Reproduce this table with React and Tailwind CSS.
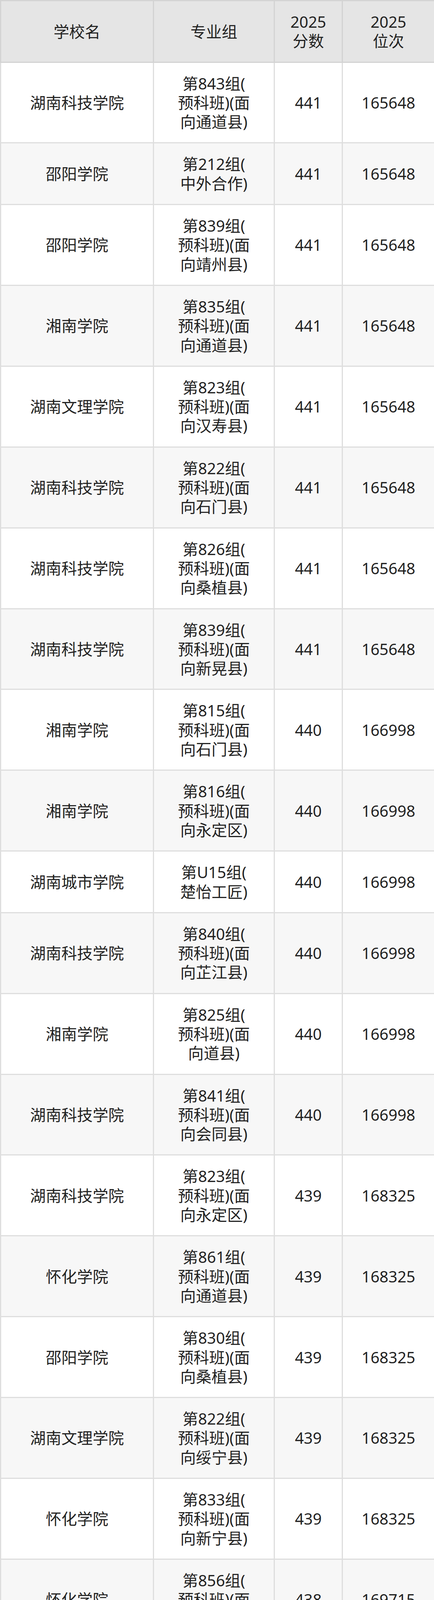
import React from 'react';

const rows = [
  ['湖南科技学院', ['第843组(', '预科班)(面', '向通道县)'], '441', '165648'],
  ['邵阳学院', ['第212组(', '中外合作)'], '441', '165648'],
  ['邵阳学院', ['第839组(', '预科班)(面', '向靖州县)'], '441', '165648'],
  ['湘南学院', ['第835组(', '预科班)(面', '向通道县)'], '441', '165648'],
  ['湖南文理学院', ['第823组(', '预科班)(面', '向汉寿县)'], '441', '165648'],
  ['湖南科技学院', ['第822组(', '预科班)(面', '向石门县)'], '441', '165648'],
  ['湖南科技学院', ['第826组(', '预科班)(面', '向桑植县)'], '441', '165648'],
  ['湖南科技学院', ['第839组(', '预科班)(面', '向新晃县)'], '441', '165648'],
  ['湘南学院', ['第815组(', '预科班)(面', '向石门县)'], '440', '166998'],
  ['湘南学院', ['第816组(', '预科班)(面', '向永定区)'], '440', '166998'],
  ['湖南城市学院', ['第U15组(', '楚怡工匠)'], '440', '166998'],
  ['湖南科技学院', ['第840组(', '预科班)(面', '向芷江县)'], '440', '166998'],
  ['湘南学院', ['第825组(', '预科班)(面', '向道县)'], '440', '166998'],
  ['湖南科技学院', ['第841组(', '预科班)(面', '向会同县)'], '440', '166998'],
  ['湖南科技学院', ['第823组(', '预科班)(面', '向永定区)'], '439', '168325'],
  ['怀化学院', ['第861组(', '预科班)(面', '向通道县)'], '439', '168325'],
  ['邵阳学院', ['第830组(', '预科班)(面', '向桑植县)'], '439', '168325'],
  ['湖南文理学院', ['第822组(', '预科班)(面', '向绥宁县)'], '439', '168325'],
  ['怀化学院', ['第833组(', '预科班)(面', '向新宁县)'], '439', '168325'],
  ['怀化学院', ['第856组(', '预科班)(面', '向麻阳县)'], '438', '169715'],
];

// each line gets a fixed-height box: mixing Noto Sans digits with CJK
// fallback glyphs would otherwise stretch the line boxes
const Lines = ({ lines }) =>
  lines.map((l, i) => (
    <div key={i} className="h-[49.3px] leading-[49.3px] whitespace-nowrap">
      {l}
    </div>
  ));

const th = 'border-[3px] border-[#d3d3d3] bg-[#e5e5e5] px-2 py-[28px] font-normal align-middle';
const td = 'border-[3px] border-[#dedede] px-2 py-[28px] align-middle';

export default function App() {
  return (
    <div
      className="w-[1110px] bg-white text-[#222] text-[40px] leading-[49.3px] text-center"
      style={{ fontFamily: '"Noto Sans", "Noto Sans CJK SC", sans-serif' }}
    >
      <table className="w-full table-fixed border-collapse">
        <colgroup>
          <col className="w-[391px]" />
          <col className="w-[309px]" />
          <col className="w-[174px]" />
          <col className="w-[236px]" />
        </colgroup>
        <thead>
          <tr>
            <th className={th}><Lines lines={['学校名']} /></th>
            <th className={th}><Lines lines={['专业组']} /></th>
            <th className={th}><Lines lines={['2025', '分数']} /></th>
            <th className={th}><Lines lines={['2025', '位次']} /></th>
          </tr>
        </thead>
        <tbody>
          {rows.map(([school, group, score, rank], i) => (
            <tr key={i} className={i % 2 === 1 ? 'bg-[#f7f7f7]' : 'bg-white'}>
              <td className={td}><Lines lines={[school]} /></td>
              <td className={td}><Lines lines={group} /></td>
              <td className={td}><Lines lines={[score]} /></td>
              <td className={td}><Lines lines={[rank]} /></td>
            </tr>
          ))}
        </tbody>
      </table>
    </div>
  );
}
